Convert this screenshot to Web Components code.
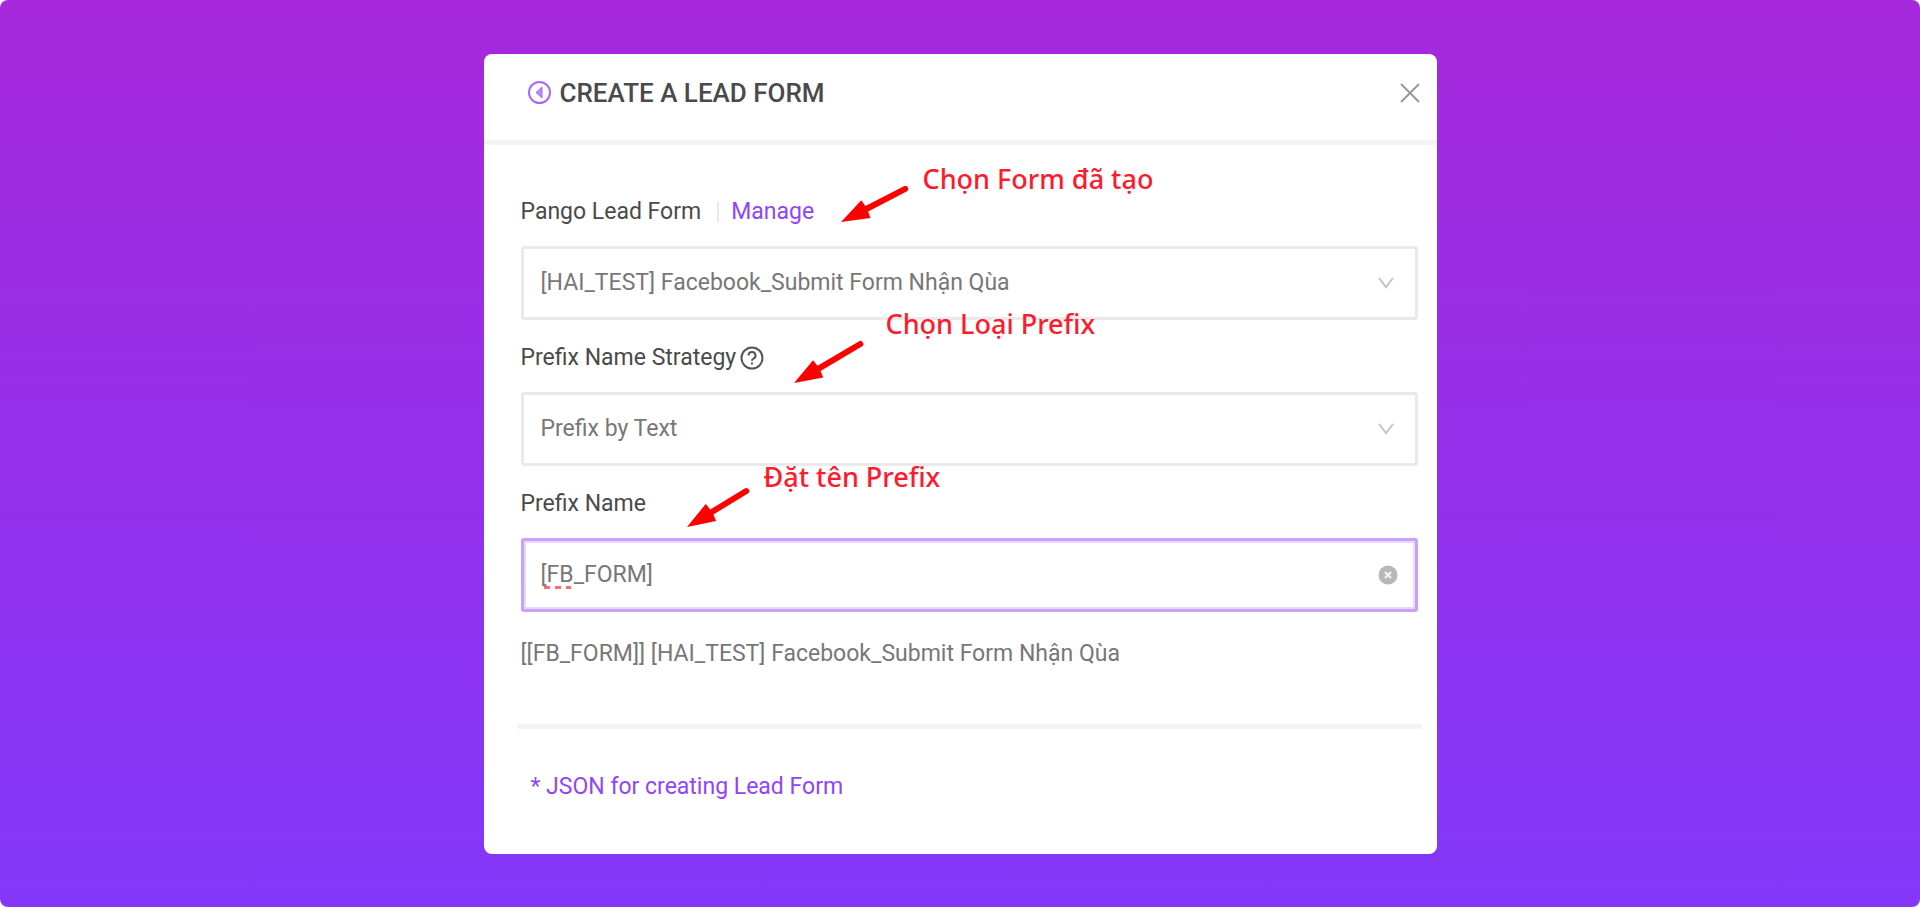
<!DOCTYPE html>
<html lang="vi">

<head>
    <meta charset="utf-8">
    <title>Create a lead form</title>
    <style>
        html {
            background: #fff;
        }

        body {
            margin: 0;
            font-family: Roboto, "Liberation Sans", sans-serif;
            font-size: 23px;
            line-height: 28px;
            color: #4a4a4a;
        }
    </style>
</head>

<body>
    <page-stage>
        <lead-modal>
            <span slot="title">CREATE A LEAD FORM</span>

            <select-field label="Pango Lead Form" value="[HAI_TEST] Facebook_Submit Form Nhận Qùa">
                <a slot="extra" href="#manage">Manage</a>
                <red-note slot="note" style="--x: 320px; --y: -36px; --drop: 26px" dx="66" dy="34">Chọn Form đã tạo</red-note>
            </select-field>

            <select-field label="Prefix Name Strategy" value="Prefix by Text" help>
                <red-note slot="note" style="--x: 273px; --y: -37px; --drop: 36px; --gap: 24px" dx="68" dy="40">Chọn Loại Prefix</red-note>
            </select-field>

            <text-field label="Prefix Name" value="[FB_FORM]">
                <red-note slot="note" style="--x: 166px; --y: -30px; --drop: 30px" dx="61" dy="37">Đặt tên Prefix</red-note>
            </text-field>

            <span slot="preview">[[FB_FORM]] [HAI_TEST] Facebook_Submit Form Nhận Qùa</span>
            <a slot="footer" href="#json">* JSON for creating Lead Form</a>
        </lead-modal>
    </page-stage>
</body>
<script>
    const fieldStyle = `
        :host {
            display: block;
            position: relative;
        }
        .head {
            display: flex;
            align-items: center;
            margin-bottom: 20px;
            color: #4a4a4a;
        }
        .box {
            display: grid;
            align-items: center;
        }
        .box > * {
            grid-area: 1 / 1;
        }
        select, input {
            appearance: none;
            box-sizing: border-box;
            width: 100%;
            height: 74px;
            margin: 0;
            padding: 0 60px 0 17px;
            border: 3px solid #e9e9e9;
            border-radius: 3px;
            outline: none;
            background: #fff;
            color: #777;
            font: inherit;
        }
    `;

    class PageStage extends HTMLElement {
        constructor() {
            super();
            const shadow = this.attachShadow({ mode: 'open' });
            shadow.innerHTML = `
            <style>
                :host {
                    display: flex;
                    justify-content: center;
                    align-items: center;
                    box-sizing: border-box;
                    min-height: 100vh;
                    padding: 24px;
                    border-radius: 8px;
                    background: linear-gradient(#a628dc, #8338f9);
                }
            </style>
            <slot></slot>
            `;
        }
    }

    class LeadModal extends HTMLElement {
        constructor() {
            super();
            const shadow = this.attachShadow({ mode: 'open' });
            shadow.innerHTML = `
            <style>
                :host {
                    display: block;
                    width: 100%;
                    max-width: 953px;
                    border-radius: 8px;
                    background: #fff;
                }
                header {
                    display: flex;
                    align-items: center;
                    gap: 8px;
                    padding: 24px 17px 32px 43px;
                    border-bottom: 5px solid #f4f4f4;
                }
                h1 {
                    flex: 1;
                    margin: 0;
                    font-size: 26px;
                    font-weight: 500;
                    line-height: 30px;
                }
                button {
                    display: flex;
                    padding: 0;
                    border: 0;
                    background: none;
                }
                form {
                    display: flex;
                    flex-direction: column;
                    gap: 24px;
                    padding: 53px 19px 53px 37px;
                }
                hr {
                    box-sizing: border-box;
                    width: calc(100% + 8px);
                    height: 5px;
                    margin: 32px -4px 20px;
                    border: 0;
                    background: #f4f4f4;
                }
                p {
                    margin: 0;
                    color: #777;
                }
                .preview {
                    padding-top: 4px;
                }
                .footer {
                    padding-left: 10px;
                }
                ::slotted(a) {
                    color: #8f45ff;
                    text-decoration: none;
                }
            </style>
            <header>
                <button type="button" aria-label="Back">
                    <svg width="25" height="25" viewBox="0 0 25 25" fill="none" stroke="#a468ff" stroke-width="2">
                        <circle cx="12.500" cy="12.500" r="10.500"/>
                        <path d="M15 7v11l-6-5.500z" fill="#b98aff" stroke-width="1"/>
                    </svg>
                </button>
                <h1><slot name="title"></slot></h1>
                <button type="button" aria-label="Close">
                    <svg width="20" height="20" viewBox="0 0 20 20" stroke="#999" stroke-width="2">
                        <path d="M1 1l18 18M19 1L1 19"/>
                    </svg>
                </button>
            </header>
            <form>
                <slot></slot>
                <p class="preview"><slot name="preview"></slot></p>
                <hr>
                <p class="footer"><slot name="footer"></slot></p>
            </form>
            `;
        }
    }

    class SelectField extends HTMLElement {
        constructor() {
            super();
            const shadow = this.attachShadow({ mode: 'open' });
            shadow.innerHTML = `
            <style>
                ${fieldStyle}
                .chevron {
                    justify-self: end;
                    margin-right: 24px;
                    pointer-events: none;
                }
                .help {
                    display: none;
                    margin-left: 4px;
                }
                :host([help]) .help {
                    display: block;
                }
                ::slotted(a) {
                    margin-left: 16px;
                    padding-left: 14px;
                    color: #8f45ff;
                    text-decoration: none;
                    background: linear-gradient(#e8e8e8, #e8e8e8) left center / 2px 20px no-repeat;
                }
            </style>
            <div class="head">
                <label for="control"></label>
                <svg class="help" width="24" height="24" viewBox="0 0 24 24" fill="none" stroke="#555" stroke-width="2">
                    <circle cx="12" cy="12" r="10.500"/>
                    <path d="M8.500 9.500a3.500 3.500 0 1 1 5 3.200c-1 .5-1.500 1-1.500 2M12 16.500v2"/>
                </svg>
                <slot name="extra"></slot>
            </div>
            <div class="box">
                <select id="control"><option></option></select>
                <svg class="chevron" width="16" height="12" viewBox="0 0 16 12" fill="none" stroke="#c4c4c4" stroke-width="2">
                    <path d="M1 1l7 9 7-9"/>
                </svg>
            </div>
            <slot name="note"></slot>
            `;
            shadow.querySelector('label').textContent = this.getAttribute('label');
            shadow.querySelector('option').textContent = this.getAttribute('value');
        }
    }

    class TextField extends HTMLElement {
        constructor() {
            super();
            const shadow = this.attachShadow({ mode: 'open' });
            shadow.innerHTML = `
            <style>
                ${fieldStyle}
                input {
                    border-color: #c9a2f7;
                    box-shadow: inset 0 0 0 2px #e8d8fd;
                }
                button {
                    display: flex;
                    justify-self: end;
                    margin-right: 20px;
                    padding: 0;
                    border: 0;
                    background: none;
                }
                .spelling {
                    margin: 26px 0 0 22px;
                    pointer-events: none;
                }
            </style>
            <div class="head"><label for="control"></label></div>
            <div class="box">
                <input id="control" type="text" spellcheck="false">
                <svg class="spelling" width="28" height="3" stroke="#ff6b6b" stroke-width="3" stroke-dasharray="6 5">
                    <path d="M1 1.500h27"/>
                </svg>
                <button type="button" aria-label="Clear">
                    <svg width="20" height="20" viewBox="0 0 20 20">
                        <circle cx="10" cy="10" r="9.500" fill="#b8b8b8"/>
                        <path d="M7 7l6 6M13 7l-6 6" stroke="#f4f4f4" stroke-width="2"/>
                    </svg>
                </button>
            </div>
            <slot name="note"></slot>
            `;
            shadow.querySelector('label').textContent = this.getAttribute('label');
            shadow.querySelector('input').value = this.getAttribute('value');
        }
    }

    // Red callout: an arrow pointing down-left, with its text beside the tail
    class RedNote extends HTMLElement {
        constructor() {
            super();
            const dx = Number(this.getAttribute('dx'));
            const dy = Number(this.getAttribute('dy'));
            const length = Math.hypot(dx, dy);
            const angle = Math.atan2(-dy, dx) * 180 / Math.PI;
            const shadow = this.attachShadow({ mode: 'open' });
            shadow.innerHTML = `
            <style>
                :host {
                    position: absolute;
                    left: var(--x);
                    top: var(--y);
                    display: flex;
                    gap: var(--gap, 16px);
                    color: #ff1a2d;
                    font: 500 27px/34px "Noto Sans", "Open Sans", sans-serif;
                    white-space: nowrap;
                    pointer-events: none;
                }
                svg {
                    margin-top: var(--drop);
                    overflow: visible;
                }
            </style>
            <svg width="${dx}" height="${dy}" fill="#f00">
                <path transform="translate(0 ${dy}) rotate(${angle})"
                    d="M0 0L28 -10L29 -3H${length - 2}q3 0 3 3t-3 3H29L28 10z"/>
            </svg>
            <slot></slot>
            `;
        }
    }

    customElements.define('page-stage', PageStage);
    customElements.define('lead-modal', LeadModal);
    customElements.define('select-field', SelectField);
    customElements.define('text-field', TextField);
    customElements.define('red-note', RedNote);
</script>

</html>
